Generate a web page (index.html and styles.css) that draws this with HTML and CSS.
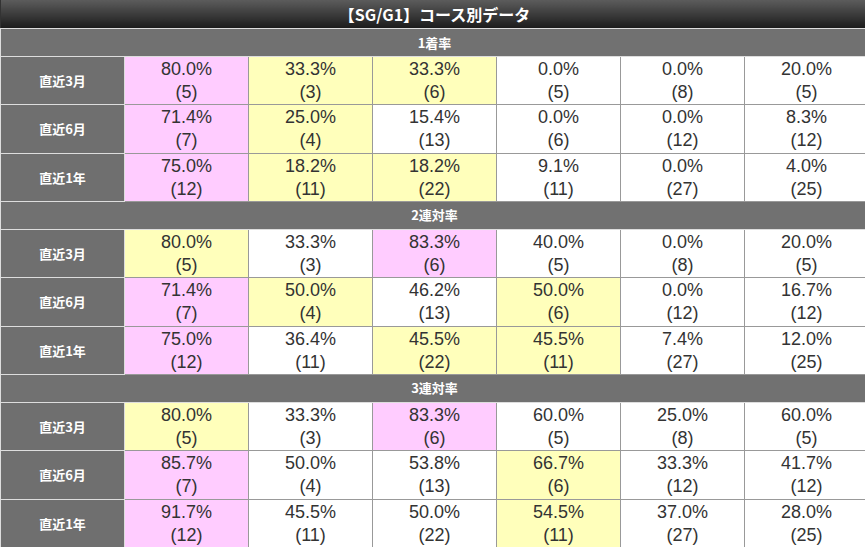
FILE: index.html
```html
<!DOCTYPE html>
<html lang="ja">
<head>
<meta charset="utf-8">
<title>【SG/G1】コース別データ</title>
<link rel="stylesheet" href="styles.css">
</head>
<body>
<div class="wrap">
<table class="course">
<colgroup>
<col class="c"><col class="c"><col class="c"><col class="c"><col class="c"><col class="c"><col class="c">
</colgroup>
<thead>
<tr><th class="title" colspan="7">【SG/G1】コース別データ</th></tr>
</thead>
<tbody>
<tr><th class="sec" colspan="7">1着率</th></tr>
<tr><th class="lab">直近3月</th><td class="pk">80.0%<br>(5)</td><td class="yl">33.3%<br>(3)</td><td class="yl">33.3%<br>(6)</td><td>0.0%<br>(5)</td><td>0.0%<br>(8)</td><td>20.0%<br>(5)</td></tr>
<tr><th class="lab">直近6月</th><td class="pk">71.4%<br>(7)</td><td class="yl">25.0%<br>(4)</td><td>15.4%<br>(13)</td><td>0.0%<br>(6)</td><td>0.0%<br>(12)</td><td>8.3%<br>(12)</td></tr>
<tr><th class="lab">直近1年</th><td class="pk">75.0%<br>(12)</td><td class="yl">18.2%<br>(11)</td><td class="yl">18.2%<br>(22)</td><td>9.1%<br>(11)</td><td>0.0%<br>(27)</td><td>4.0%<br>(25)</td></tr>
<tr><th class="sec" colspan="7">2連対率</th></tr>
<tr><th class="lab">直近3月</th><td class="yl">80.0%<br>(5)</td><td>33.3%<br>(3)</td><td class="pk">83.3%<br>(6)</td><td>40.0%<br>(5)</td><td>0.0%<br>(8)</td><td>20.0%<br>(5)</td></tr>
<tr><th class="lab">直近6月</th><td class="pk">71.4%<br>(7)</td><td class="yl">50.0%<br>(4)</td><td>46.2%<br>(13)</td><td class="yl">50.0%<br>(6)</td><td>0.0%<br>(12)</td><td>16.7%<br>(12)</td></tr>
<tr><th class="lab">直近1年</th><td class="pk">75.0%<br>(12)</td><td>36.4%<br>(11)</td><td class="yl">45.5%<br>(22)</td><td class="yl">45.5%<br>(11)</td><td>7.4%<br>(27)</td><td>12.0%<br>(25)</td></tr>
<tr><th class="sec" colspan="7">3連対率</th></tr>
<tr><th class="lab">直近3月</th><td class="yl">80.0%<br>(5)</td><td>33.3%<br>(3)</td><td class="pk">83.3%<br>(6)</td><td>60.0%<br>(5)</td><td>25.0%<br>(8)</td><td>60.0%<br>(5)</td></tr>
<tr><th class="lab">直近6月</th><td class="pk">85.7%<br>(7)</td><td>50.0%<br>(4)</td><td>53.8%<br>(13)</td><td class="yl">66.7%<br>(6)</td><td>33.3%<br>(12)</td><td>41.7%<br>(12)</td></tr>
<tr><th class="lab">直近1年</th><td class="pk">91.7%<br>(12)</td><td>45.5%<br>(11)</td><td>50.0%<br>(22)</td><td class="yl">54.5%<br>(11)</td><td>37.0%<br>(27)</td><td>28.0%<br>(25)</td></tr>
</tbody>
</table>
</div>
</body>
</html>
```
FILE: styles.css
```css
html, body {
  margin: 0;
  padding: 0;
  background: #fff;
}
.wrap {
  width: 865px;
  height: 547px;
  overflow: hidden;
}
.course {
  border-collapse: collapse;
  table-layout: fixed;
  width: 868px;
  font-family: "Liberation Sans", Arial, "Noto Sans CJK JP", sans-serif;
}
.course col.c {
  width: 124px;
}
.course th,
.course td {
  padding: 0;
  text-align: center;
  vertical-align: middle;
}
.course .title {
  height: 28px;
  background: linear-gradient(to bottom, #5c5c5c 0%, #1c1c1c 100%);
  color: #fff;
  font-family: "Noto Sans CJK JP", sans-serif;
  font-weight: bold;
  font-size: 16px;
  line-height: 28px;
  border: 1px solid #ddd;
  border-top: none;
  border-left: 1px solid #333;
}
.course .sec {
  height: 27px;
  background: #717171;
  color: #fff;
  font-family: "Noto Sans CJK JP", sans-serif;
  font-weight: bold;
  font-size: 13px;
  line-height: 26px;
  border: 1px solid #ddd;
}
.course .lab {
  background: #6f6f6f;
  color: #fff;
  font-family: "Noto Sans CJK JP", sans-serif;
  font-weight: bold;
  font-size: 13px;
  border: 1px solid #ddd;
}
.course td {
  height: 46.33px;
  padding-top: 1px;
  background: #fff;
  color: #333;
  font-size: 18px;
  line-height: 23px;
  border: 1px solid #999;
}
.course td.pk {
  background: #ffccff;
}
.course td.yl {
  background: #ffffbb;
}
```
